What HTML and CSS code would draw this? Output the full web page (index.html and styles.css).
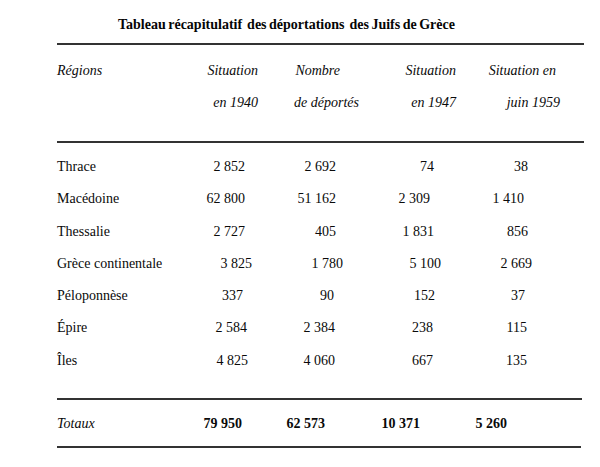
FILE: index.html
```html
<!DOCTYPE html>
<html lang="fr">
<head>
<meta charset="utf-8">
<title>Tableau récapitulatif des déportations des Juifs de Grèce</title>
<link rel="stylesheet" href="styles.css">
</head>
<body>
<div class="page">
  <h1 class="title">Tableau récapitulatif&nbsp; des déportations&nbsp; des Juifs de Grèce</h1>
  <div class="table">
    <div class="rule"></div>
    <div class="head">
      <div class="row">
        <span class="label">Régions</span>
        <span class="cell p2">Situation</span>
        <span class="cell p22">Nombre</span>
        <span class="cell p4">Situation</span>
        <span class="cell p6">Situation en</span>
      </div>
      <div class="row">
        <span class="label"></span>
        <span class="cell p2">en 1940</span>
        <span class="cell p3">de déportés</span>
        <span class="cell p4">en 1947</span>
        <span class="cell p2">juin 1959</span>
      </div>
    </div>
    <div class="rule r2"></div>
    <div class="body">
      <div class="row">
        <span class="label">Thrace</span>
        <span class="cell p15">2 852</span>
        <span class="cell p26">2 692</span>
        <span class="cell p26">74</span>
        <span class="cell p34">38</span>
      </div>
      <div class="row">
        <span class="label">Macédoine</span>
        <span class="cell p15">62 800</span>
        <span class="cell p26">51 162</span>
        <span class="cell p30">2 309</span>
        <span class="cell p38">1 410</span>
      </div>
      <div class="row">
        <span class="label">Thessalie</span>
        <span class="cell p15">2 727</span>
        <span class="cell p26">405</span>
        <span class="cell p26">1 831</span>
        <span class="cell p34">856</span>
      </div>
      <div class="row">
        <span class="label">Grèce continentale</span>
        <span class="cell p8">3 825</span>
        <span class="cell p19">1 780</span>
        <span class="cell p19">5 100</span>
        <span class="cell p30">2 669</span>
      </div>
      <div class="row">
        <span class="label">Péloponnèse</span>
        <span class="cell p17">337</span>
        <span class="cell p28">90</span>
        <span class="cell p25">152</span>
        <span class="cell p37">37</span>
      </div>
      <div class="row">
        <span class="label">Épire</span>
        <span class="cell p13">2 584</span>
        <span class="cell p27">2 384</span>
        <span class="cell p27">238</span>
        <span class="cell p35">115</span>
      </div>
      <div class="row">
        <span class="label">Îles</span>
        <span class="cell p12">4 825</span>
        <span class="cell p27">4 060</span>
        <span class="cell p27">667</span>
        <span class="cell p35">135</span>
      </div>
    </div>
    <div class="rule r3"></div>
    <div class="row total">
      <span class="label">Totaux</span>
      <span class="cell p18">79 950</span>
      <span class="cell p37">62 573</span>
      <span class="cell p40">10 371</span>
      <span class="cell p55">5 260</span>
    </div>
    <div class="rule r4"></div>
  </div>
</div>
</body>
</html>
```

FILE: styles.css
```css
html, body {
  margin: 0;
  padding: 0;
  background: #ffffff;
}

body {
  font-family: "Liberation Serif", "Times New Roman", serif;
  color: #0a0a0a;
  font-size: 14px;
}

.page {
  width: 600px;
  height: 467px;
  overflow: hidden;
}

.title {
  margin: 17px 0 0 118px;
  font-size: 14px;
  line-height: 16px;
  font-weight: bold;
  white-space: nowrap;
  word-spacing: -1px;
  color: #050505;
}

.table {
  margin-left: 57px;
  width: 527px;
}

.rule {
  height: 2px;
  background: #333333;
  margin-top: 10px;
}

.r2 {
  margin-top: 22px;
}

.r3 {
  margin-top: 21px;
  width: 525px;
}

.r4 {
  margin-top: 6px;
  width: 524px;
}

.head {
  margin-top: 10px;
  font-style: italic;
}

.head .row {
  line-height: 32px;
}

.body {
  margin-top: 8px;
}

.row {
  display: grid;
  grid-template-columns: 133px 70px 102px 98px 102px 1fr;
  line-height: 32.3px;
  white-space: nowrap;
}

.label {
  text-align: left;
}

.cell {
  text-align: right;
}

.total {
  margin-top: 8px;
  line-height: 32px;
}

.total .label {
  font-style: italic;
}

.total .cell {
  font-weight: bold;
}

.p2 { padding-right: 2px; }
.p3 { padding-right: 3px; }
.p4 { padding-right: 4px; }
.p6 { padding-right: 6px; }
.p8 { padding-right: 8px; }
.p12 { padding-right: 12px; }
.p13 { padding-right: 13px; }
.p15 { padding-right: 15px; }
.p17 { padding-right: 17px; }
.p18 { padding-right: 18px; }
.p19 { padding-right: 19px; }
.p22 { padding-right: 22px; }
.p25 { padding-right: 25px; }
.p26 { padding-right: 26px; }
.p27 { padding-right: 27px; }
.p28 { padding-right: 28px; }
.p30 { padding-right: 30px; }
.p34 { padding-right: 34px; }
.p35 { padding-right: 35px; }
.p37 { padding-right: 37px; }
.p38 { padding-right: 38px; }
.p40 { padding-right: 40px; }
.p55 { padding-right: 55px; }
```
